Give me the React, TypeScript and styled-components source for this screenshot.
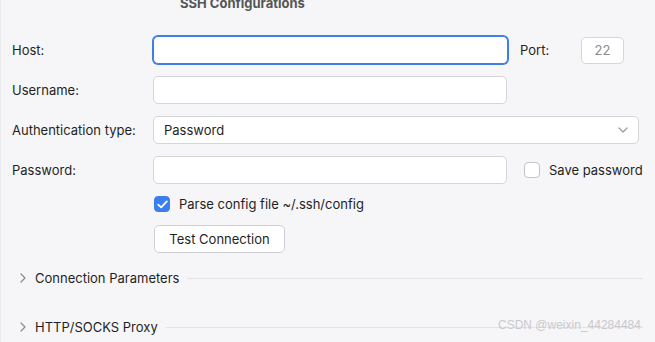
import React, { ReactElement } from 'react';
import styled, { createGlobalStyle } from 'styled-components';

const GlobalStyle = createGlobalStyle`
  html, body {
    margin: 0;
    padding: 0;
    background: #f6f6f8;
  }
  body {
    font-family: Inter, "Noto Sans", "Liberation Sans", sans-serif;
    font-size: 13px;
    color: #1f1f1f;
  }
`;

const Panel = styled.div`
  position: relative;
  width: 655px;
  height: 342px;
  overflow: hidden;
  background: #f6f6f8;
  border-left: 1px solid #ececef;
  box-sizing: border-box;
`;

const Title = styled.div`
  margin-top: -5px;
  padding-left: 179px;
  height: 16px;
  line-height: 16px;
  font-size: 13px;
  font-weight: 700;
  color: #555;
`;

const Form = styled.div`
  display: flex;
  flex-direction: column;
  gap: 12px;
  padding: 25px 0 0 11px;
`;

const Row = styled.div`
  display: flex;
  align-items: center;
  height: 28px;
`;

const Label = styled.label`
  width: 141px;
  flex-shrink: 0;
`;

const Field = styled.div<{ width: number; focused?: boolean }>`
  width: ${(p) => p.width}px;
  height: 28px;
  box-sizing: border-box;
  background: #fff;
  border: 1px solid ${(p) => (p.focused ? '#3f7ee8' : '#d6d6da')};
  box-shadow: ${(p) => (p.focused ? '0 0 0 1px #3f7ee8' : 'none')};
  border-radius: 5px;
  display: flex;
  align-items: center;
  justify-content: space-between;
  padding: 0 10px;
`;

const PortLabel = styled.span`
  margin-left: 12px;
  width: 61px;
`;

const PortField = styled.div`
  width: 43px;
  height: 27px;
  box-sizing: border-box;
  background: #fff;
  border: 1px solid #d6d6da;
  border-radius: 5px;
  display: flex;
  align-items: center;
  justify-content: center;
  color: #8a8a8e;
`;

const Check = styled.span<{ checked?: boolean }>`
  width: 16px;
  height: 16px;
  box-sizing: border-box;
  border-radius: 4px;
  background: ${(p) => (p.checked ? '#3b7ef0' : '#fff')};
  border: 1px solid ${(p) => (p.checked ? '#3b7ef0' : '#c4c4c8')};
  display: inline-flex;
  align-items: center;
  justify-content: center;
  flex-shrink: 0;
`;

const CheckLabel = styled.span`
  margin-left: 9px;
`;

const SavePassword = styled.div`
  display: flex;
  align-items: center;
  margin-left: 17px;
`;

const Indented = styled.div`
  display: flex;
  align-items: center;
  padding-left: 142px;
`;

const ParseRow = styled(Indented)`
  margin-top: -1px;
  height: 18px;
`;

const Button = styled.button`
  width: 131px;
  height: 28px;
  background: #fff;
  border: 1px solid #cfcfd3;
  border-radius: 5px;
  font: inherit;
  color: #1f1f1f;
  padding: 0;
`;

const Section = styled.div<{ top: number }>`
  display: flex;
  align-items: center;
  margin-top: ${(p) => p.top}px;
  padding-left: 19px;
  width: 623px;
  height: 18px;
`;

const Chevron = styled.span`
  display: inline-flex;
  width: 15px;
  color: #8a8a8e;
`;

const SectionLine = styled.span`
  flex: 1;
  height: 1px;
  margin-left: 8px;
  background: #e4e4e7;
`;

const Watermark = styled.div`
  position: absolute;
  left: 497px;
  top: 318px;
  font-family: "Liberation Sans", Arial, sans-serif;
  font-size: 12px;
  color: #c9c9cc;
`;

const CheckIcon = (): ReactElement => (
  <svg width="11" height="9" viewBox="0 0 11 9" fill="none">
    <path d="M1.2 4.6 L4.2 7.4 L9.8 1.4" stroke="#fff" strokeWidth="1.8" strokeLinecap="round" strokeLinejoin="round" />
  </svg>
);

const DownIcon = (): ReactElement => (
  <svg width="10" height="6" viewBox="0 0 10 6" fill="none">
    <path d="M1 1 L5 5 L9 1" stroke="#9a9a9e" strokeWidth="1.2" strokeLinecap="round" strokeLinejoin="round" />
  </svg>
);

const RightIcon = (): ReactElement => (
  <svg width="6" height="10" viewBox="0 0 6 10" fill="none">
    <path d="M1 1 L5 5 L1 9" stroke="#8a8a8e" strokeWidth="1.2" strokeLinecap="round" strokeLinejoin="round" />
  </svg>
);

const App = (): ReactElement => (
  <Panel>
    <GlobalStyle />
    <Title>SSH Configurations</Title>
    <Form>
      <Row>
        <Label>Host:</Label>
        <Field width={355} focused />
        <PortLabel>Port:</PortLabel>
        <PortField>22</PortField>
      </Row>
      <Row>
        <Label>Username:</Label>
        <Field width={354} />
      </Row>
      <Row>
        <Label>Authentication type:</Label>
        <Field width={486}>
          <span>Password</span>
          <DownIcon />
        </Field>
      </Row>
      <Row>
        <Label>Password:</Label>
        <Field width={354} />
        <SavePassword>
          <Check />
          <CheckLabel>Save password</CheckLabel>
        </SavePassword>
      </Row>
      <ParseRow>
        <Check checked>
          <CheckIcon />
        </Check>
        <CheckLabel>Parse config file ~/.ssh/config</CheckLabel>
      </ParseRow>
      <Indented>
        <Button>Test Connection</Button>
      </Indented>
    </Form>
    <Section top={16}>
      <Chevron>
        <RightIcon />
      </Chevron>
      <span>Connection Parameters</span>
      <SectionLine />
    </Section>
    <Section top={31}>
      <Chevron>
        <RightIcon />
      </Chevron>
      <span>HTTP/SOCKS Proxy</span>
      <SectionLine />
    </Section>
    <Watermark>CSDN @weixin_44284484</Watermark>
  </Panel>
);

export default App;
